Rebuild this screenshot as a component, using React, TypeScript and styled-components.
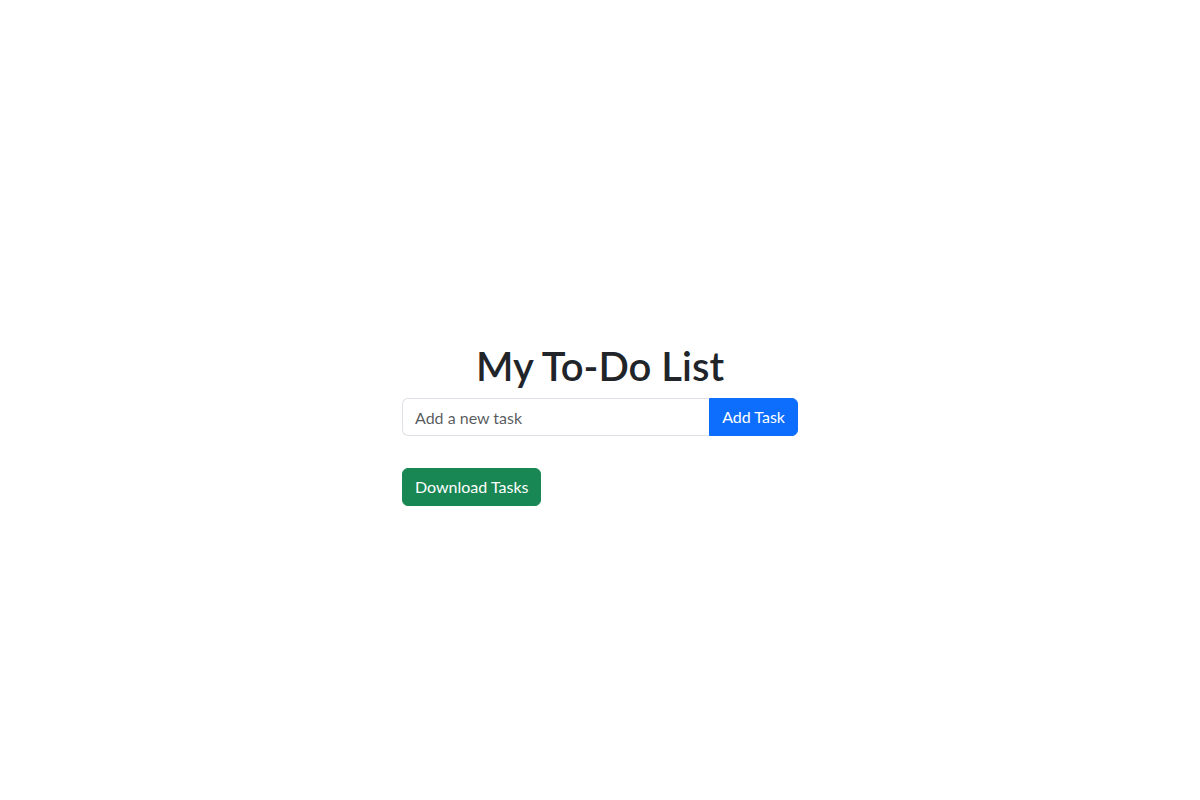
import React, { useState } from 'react';
import styled, { createGlobalStyle } from 'styled-components';

const GlobalStyle = createGlobalStyle`
  *, *::before, *::after {
    box-sizing: border-box;
  }

  body {
    margin: 0;
    background: #fff;
    color: #212529;
    font-family: Lato, "Noto Sans", "Liberation Sans", sans-serif;
    font-size: 16px;
    line-height: 1.5;
  }
`;

const Page = styled.div`
  min-height: 100vh;
  padding-top: 342px;
  display: flex;
  justify-content: center;
`;

const Container = styled.div`
  width: 396px;
  display: flex;
  flex-direction: column;
  align-items: flex-start;
`;

const Title = styled.h1`
  align-self: stretch;
  margin: 0 0 8px;
  font-size: 40px;
  font-weight: 600;
  line-height: 1.2;
  text-align: center;
  color: #212529;
`;

const InputGroup = styled.div`
  align-self: stretch;
  display: flex;
  margin-bottom: 16px;
`;

const TaskInput = styled.input`
  flex: 1;
  min-width: 0;
  height: 38px;
  padding: 6px 12px;
  font: inherit;
  color: #212529;
  border: 1px solid #dee2e6;
  border-right: none;
  border-radius: 6px 0 0 6px;
  outline: none;

  &::placeholder {
    color: rgba(33, 37, 41, 0.75);
  }
`;

const Button = styled.button<{ $variant: 'primary' | 'success'; $attached?: boolean }>`
  height: 38px;
  padding: 6px 12px;
  font: inherit;
  color: #fff;
  border: 1px solid ${p => (p.$variant === 'primary' ? '#0d6efd' : '#198754')};
  background: ${p => (p.$variant === 'primary' ? '#0d6efd' : '#198754')};
  border-radius: ${p => (p.$attached ? '0 6px 6px 0' : '6px')};
  cursor: pointer;
`;

const TaskList = styled.ul`
  align-self: stretch;
  list-style: none;
  margin: 0 0 16px;
  padding: 0;
`;

const TaskItem = styled.li`
  padding: 8px 16px;
  border: 1px solid #dee2e6;
`;

export default function App() {
  const [tasks, setTasks] = useState<string[]>([]);
  const [text, setText] = useState('');

  const addTask = () => {
    if (!text.trim()) return;
    setTasks([...tasks, text.trim()]);
    setText('');
  };

  const download = () => {
    const blob = new Blob([tasks.join('\n')], { type: 'text/plain' });
    const url = URL.createObjectURL(blob);
    const a = document.createElement('a');
    a.href = url;
    a.download = 'tasks.txt';
    a.click();
    URL.revokeObjectURL(url);
  };

  return (
    <>
      <GlobalStyle />
      <Page>
        <Container>
          <Title>My To-Do List</Title>
          <InputGroup>
            <TaskInput
              placeholder="Add a new task"
              value={text}
              onChange={e => setText(e.target.value)}
            />
            <Button $variant="primary" $attached onClick={addTask}>
              Add Task
            </Button>
          </InputGroup>
          <TaskList>
            {tasks.map((t, i) => (
              <TaskItem key={i}>{t}</TaskItem>
            ))}
          </TaskList>
          <Button $variant="success" onClick={download}>
            Download Tasks
          </Button>
        </Container>
      </Page>
    </>
  );
}
